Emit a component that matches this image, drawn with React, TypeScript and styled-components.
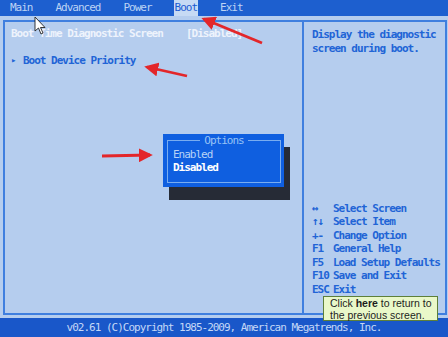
import React from 'react';
import styled, { createGlobalStyle } from 'styled-components';

const GlobalStyle = createGlobalStyle`
	html, body {
		margin: 0;
		padding: 0;
		background: #b5cdee;
	}
`;

const menu = ['Main', 'Advanced', 'Power', 'Boot', 'Exit'];

const keys = [
	['↔', 'Select Screen'],
	['↑↓', 'Select Item'],
	['+-', 'Change Option'],
	['F1', 'General Help'],
	['F5', 'Load Setup Defaults'],
	['F10', 'Save and Exit'],
	['ESC', 'Exit'],
];

const App = () => {
	return (
		<Screen>
			<GlobalStyle />
			<MenuBar>
				{menu.map((m) => (
					<MenuItem key={m} $active={m === 'Boot'}>
						{m}
					</MenuItem>
				))}
			</MenuBar>
			<Body>
				<Frame>
					<LeftPanel>
						<SettingRow>
							<span>Boot Time Diagnostic Screen</span>
							<span>[Disabled]</span>
						</SettingRow>
						<SubMenu>
							<Triangle>▸</Triangle>Boot Device Priority
						</SubMenu>
						<OptionsBox>
							<OptionsFrame>
								<OptionsTitle>Options</OptionsTitle>
								<Option>Enabled</Option>
								<Option $selected>Disabled</Option>
							</OptionsFrame>
						</OptionsBox>
					</LeftPanel>
					<RightPanel>
						<HelpText>
							Display the diagnostic
							<br />
							screen during boot.
						</HelpText>
						<KeyList>
							{keys.map(([k, t]) => (
								<React.Fragment key={k}>
									<span>{k}</span>
									<span>{t}</span>
								</React.Fragment>
							))}
						</KeyList>
					</RightPanel>
				</Frame>
			</Body>
			<Footer>v02.61 (C)Copyright 1985-2009, American Megatrends, Inc.</Footer>

			<Arrows width='448' height='337' viewBox='0 0 448 337'>
				<defs>
					<marker id='head' markerWidth='5' markerHeight='5' refX='4' refY='2.5' orient='auto'>
						<path d='M0,0 L5,2.5 L0,5 z' fill='#e3262a' />
					</marker>
				</defs>
				<line x1='262' y1='43' x2='204' y2='19' stroke='#e3262a' strokeWidth='2.8' markerEnd='url(#head)' />
				<line x1='187' y1='76' x2='147' y2='67' stroke='#e3262a' strokeWidth='2.8' markerEnd='url(#head)' />
				<line x1='102' y1='156' x2='150' y2='155' stroke='#e3262a' strokeWidth='2.8' markerEnd='url(#head)' />
				<path
					d='M35 17 L35 31 L38.5 28 L41 34 L43 33 L40.5 27.5 L45 27.5 Z'
					fill='#ffffff'
					stroke='#222'
					strokeWidth='0.9'
					strokeLinejoin='round'
				/>
			</Arrows>

			<Tooltip>
				<TipLine>
					Click <b>here</b> to return to
				</TipLine>
				<TipLine>the previous screen.</TipLine>
			</Tooltip>
		</Screen>
	);
};

export default App;

const mono = `'DejaVu Sans Mono', 'Liberation Mono', monospace`;

const Screen = styled.div({
	position: 'relative',
	width: '448px',
	height: '337px',
	overflow: 'hidden',
	display: 'flex',
	flexDirection: 'column',
	background: '#b5cdee',
	fontFamily: mono,
	fontSize: '11px',
	fontWeight: 'bold',
	letterSpacing: '-1px',
	lineHeight: '13.5px',
});

const MenuBar = styled.div({
	height: '16px',
	background: '#1d5fcf',
	display: 'flex',
	alignItems: 'stretch',
	gap: '23px',
	paddingLeft: '10px',
});

const MenuItem = styled.div<{ $active?: boolean }>(({ $active }) => ({
	display: 'flex',
	alignItems: 'center',
	fontWeight: 'normal',
	color: $active ? '#1b5bd2' : '#bcd3f4',
	background: $active ? '#c6daf4' : 'transparent',
	margin: $active ? '0 -1px' : '0',
	padding: $active ? '0 1px' : '0',
}));

const Body = styled.div({
	flex: 1,
	display: 'flex',
	padding: '4px 1px 3px 3px',
});

const Frame = styled.div({
	flex: 1,
	display: 'grid',
	gridTemplateColumns: '297px 1fr',
	border: '2px solid #3f7fdf',
});

const LeftPanel = styled.div({
	position: 'relative',
	padding: '5px 6px',
	display: 'flex',
	flexDirection: 'column',
	gap: '13.5px',
});

const SettingRow = styled.div({
	display: 'grid',
	gridTemplateColumns: '175px 1fr',
	color: '#eef3fc',
	whiteSpace: 'nowrap',
});

const SubMenu = styled.div({
	color: '#2164d6',
	display: 'flex',
	alignItems: 'center',
});

const Triangle = styled.span({
	fontSize: '9px',
	width: '12px',
});

const OptionsBox = styled.div({
	position: 'absolute',
	left: '158px',
	top: '112px',
	width: '121px',
	height: '53px',
	boxSizing: 'border-box',
	background: '#0f5fe0',
	boxShadow: '6px 13px 0 #262b36',
	padding: '0 3px 4px 4px',
	display: 'flex',
});

const OptionsFrame = styled.fieldset({
	flex: 1,
	margin: 0,
	padding: '0 5px',
	border: '1px solid #79adf0',
	minWidth: 0,
});

const OptionsTitle = styled.legend({
	margin: '0 auto',
	padding: '0 4px',
	fontWeight: 'normal',
	color: '#98c4f6',
});

const Option = styled.div<{ $selected?: boolean }>(({ $selected }) => ({
	color: $selected ? '#ffffff' : '#b7d3f6',
	fontWeight: $selected ? 'bold' : 'normal',
}));

const RightPanel = styled.div({
	borderLeft: '2px solid #3f7fdf',
	padding: '6px 4px 17px 8px',
	display: 'flex',
	flexDirection: 'column',
	justifyContent: 'space-between',
	color: '#2164d6',
	whiteSpace: 'nowrap',
});

const HelpText = styled.div({});

const KeyList = styled.div({
	display: 'grid',
	gridTemplateColumns: '21px 1fr',
});

const Footer = styled.div({
	height: '19px',
	background: '#1957c9',
	color: '#c4d8f7',
	fontWeight: 'normal',
	display: 'flex',
	alignItems: 'center',
	justifyContent: 'center',
});

const Arrows = styled.svg({
	position: 'absolute',
	left: 0,
	top: 0,
	pointerEvents: 'none',
});

const Tooltip = styled.div({
	position: 'absolute',
	left: '323px',
	top: '296px',
	width: '115px',
	height: '25px',
	boxSizing: 'border-box',
	background: '#e9f8c9',
	border: '1px solid #5d7f3a',
	padding: '0 0 0 6px',
	fontFamily: `'Liberation Sans', Arial, sans-serif`,
	fontSize: '10.5px',
	fontWeight: 'normal',
	letterSpacing: 0,
	lineHeight: '12px',
	color: '#1d1d1d',
	display: 'flex',
	flexDirection: 'column',
	justifyContent: 'center',
});

const TipLine = styled.div({
	whiteSpace: 'nowrap',
});
